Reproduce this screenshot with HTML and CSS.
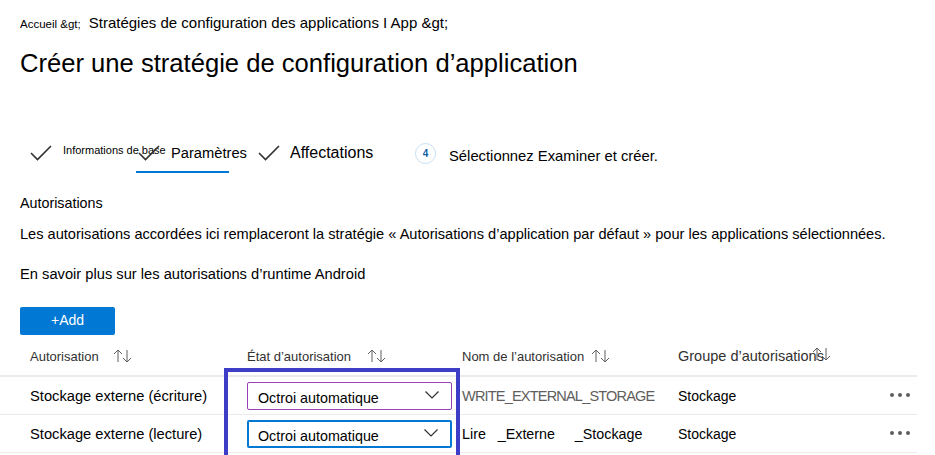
FILE: index.html
```html
<!DOCTYPE html>
<html lang="fr">
<head>
<meta charset="utf-8">
<link rel="stylesheet" href="styles.css">
</head>
<body>
<div class="page">
  <div class="breadcrumb">
    <span class="crumb-small">Accueil &amp;gt;</span>
    <span class="crumb-big">Stratégies de configuration des applications I App &amp;gt;</span>
  </div>
  <h1 class="title">Créer une stratégie de configuration d’application</h1>

  <div class="steps">
    <div class="step step-1">
      <svg class="check" width="22" height="16" viewBox="0 0 22 16"><polyline points="1,8 7.5,14.5 21,1" fill="none" stroke="#323130" stroke-width="1.6"/></svg>
      <span class="step-label small">Informations de base</span>
    </div>
    <div class="step step-2 active">
      <svg class="check" width="22" height="16" viewBox="0 0 22 16"><polyline points="1,8 7.5,14.5 21,1" fill="none" stroke="#323130" stroke-width="1.6"/></svg>
      <span class="step-label mid">Paramètres</span>
    </div>
    <div class="step step-3">
      <svg class="check" width="22" height="16" viewBox="0 0 22 16"><polyline points="1,8 7.5,14.5 21,1" fill="none" stroke="#323130" stroke-width="1.6"/></svg>
      <span class="step-label big">Affectations</span>
    </div>
    <div class="step step-4">
      <span class="num">4</span>
      <span class="step-label reg">Sélectionnez Examiner et créer.</span>
    </div>
  </div>

  <div class="section-title">Autorisations</div>
  <p class="desc">Les autorisations accordées ici remplaceront la stratégie « Autorisations d’application par défaut » pour les applications sélectionnées.</p>
  <p class="desc learn">En savoir plus sur les autorisations d’runtime Android</p>

  <button class="add-btn">+Add</button>
</div>

<div class="table">
  <div class="row head">
    <div class="cell">Autorisation <svg class="sort s1" width="20" height="14" viewBox="0 0 20 14"><path d="M5 13V1M1 5L5 1L9 5M14 1V13M10 9L14 13L18 9" fill="none" stroke="#605e5c" stroke-width="1"/></svg></div>
    <div class="cell">État d’autorisation <svg class="sort s2" width="20" height="14" viewBox="0 0 20 14"><path d="M5 13V1M1 5L5 1L9 5M14 1V13M10 9L14 13L18 9" fill="none" stroke="#605e5c" stroke-width="1"/></svg></div>
    <div class="cell">Nom de l’autorisation <svg class="sort s3" width="20" height="14" viewBox="0 0 20 14"><path d="M5 13V1M1 5L5 1L9 5M14 1V13M10 9L14 13L18 9" fill="none" stroke="#605e5c" stroke-width="1"/></svg></div>
    <div class="cell grp">Groupe d’autorisations<svg class="sort s4" width="20" height="14" viewBox="0 0 20 14"><path d="M5 13V1M1 5L5 1L9 5M14 1V13M10 9L14 13L18 9" fill="none" stroke="#605e5c" stroke-width="1"/></svg></div>
    <div class="cell"></div>
  </div>
  <div class="row">
    <div class="cell">Stockage externe (écriture)</div>
    <div class="cell"><div class="select purple"><span>Octroi automatique</span><svg width="14" height="8" viewBox="0 0 14 8"><polyline points="0.5,0.5 7,7 13.5,0.5" fill="none" stroke="#323130" stroke-width="1.2"/></svg></div></div>
    <div class="cell gray">WRITE_EXTERNAL_STORAGE</div>
    <div class="cell grp-val">Stockage</div>
    <div class="cell dots"><i></i><i></i><i></i></div>
  </div>
  <div class="row">
    <div class="cell">Stockage externe (lecture)</div>
    <div class="cell"><div class="select blue"><span>Octroi automatique</span><svg width="14" height="8" viewBox="0 0 14 8"><polyline points="0.5,0.5 7,7 13.5,0.5" fill="none" stroke="#323130" stroke-width="1.2"/></svg></div></div>
    <div class="cell name">Lire&nbsp;&nbsp;&nbsp;_Externe&nbsp;&nbsp;&nbsp;&nbsp;&nbsp;_Stockage</div>
    <div class="cell grp-val">Stockage</div>
    <div class="cell dots"><i></i><i></i><i></i></div>
  </div>
  <div class="highlight"></div>
</div>
</body>
</html>
```

FILE: styles.css
```css
* { box-sizing: border-box; }
html, body { margin: 0; padding: 0; background: #fff; }
body {
  font-family: "Liberation Sans", Arial, sans-serif;
  color: #000;
  width: 935px;
  height: 455px;
  overflow: hidden;
}
.page { padding-left: 20px; }

.breadcrumb {
  display: flex;
  align-items: baseline;
  gap: 8px;
  padding-top: 14px;
  height: 36px;
}
.crumb-small { font-size: 11.5px; }
.crumb-big { font-size: 15px; }

.title {
  margin: 12px 0 0;
  font-size: 25.6px;
  font-weight: 400;
  line-height: 30px;
}

.steps {
  display: flex;
  align-items: flex-start;
  margin-top: 61px;
  margin-left: 10px;
  height: 46px;
}
.step { display: flex; align-items: flex-start; position: relative; }
.check { margin-top: 6px; flex: none; }
.step-1 { width: 107px; }
.step-1 .step-label { margin-left: 11px; white-space: nowrap; }
.step-label.small { font-size: 11px; margin-top: 5px; color: #000; }
.step-2 { width: 121px; padding-left: 1px; }
.step-2 .step-label { margin-left: 11px; margin-top: 6px; font-size: 14.7px; }
.step-2::after {
  content: "";
  position: absolute;
  left: -1px;
  top: 32px;
  width: 93px;
  height: 2px;
  background: #0078d4;
}
.step-3 { width: 157px; }
.step-3 .step-label { margin-left: 10px; margin-top: 5px; font-size: 16px; }
.step-4 { align-items: center; margin-top: 3px; }
.num {
  width: 21px;
  height: 21px;
  border-radius: 50%;
  border: 1.5px solid #c7e0f4;
  color: #0f5fa8;
  font-size: 10px;
  font-weight: 700;
  display: flex;
  align-items: center;
  justify-content: center;
  flex: none;
}
.step-4 .step-label { margin-left: 13px; margin-top: 6px; font-size: 14.8px; }

.section-title { font-size: 14.3px; margin-top: 10px; line-height: 16px; }
.desc { margin: 0; font-size: 14.6px; line-height: 16px; }
.section-title + .desc { margin-top: 15px; }
.desc.learn { margin-top: 24px; font-size: 14.7px; }

.add-btn {
  display: block;
  margin-top: 25px;
  width: 95px;
  height: 28px;
  background: #0078d4;
  color: #fff;
  border: none;
  border-radius: 2px;
  font-family: "Liberation Sans", Arial, sans-serif;
  font-size: 14px;
  padding: 0 0 2px;
}

.table {
  position: relative;
  width: 917px;
  margin-top: 2px;
}
.row {
  display: grid;
  grid-template-columns: 247px 215px 216px 192px 47px;
  height: 38px;
  align-items: center;
  border-bottom: 1px solid #edebe9;
  font-size: 14.7px;
  color: #000;
}
.row .cell:first-child { padding-left: 30px; }
.row.head { height: 40px; font-size: 13px; color: #323130; border-bottom: 2px solid #edebe9; }
.row.head .cell { display: flex; align-items: center; white-space: nowrap; }
.row.head .grp { font-size: 14.5px; }
.sort { flex: none; }
.s1 { margin-left: 14px; }
.s2 { margin-left: 16px; }
.s3 { margin-left: 7px; }
.s4 { margin-left: -12px; margin-top: -4px; }
.cell.gray { color: #605e5c; font-size: 14.5px; letter-spacing: -0.8px; white-space: nowrap; }
.cell.name { font-size: 14.3px; }
.cell.grp-val { font-size: 14px; }

.select {
  width: 205px;
  height: 28px;
  border-radius: 2px;
  display: flex;
  align-items: center;
  justify-content: space-between;
  padding: 4px 12px 0 10px;
  font-size: 14.3px;
}
.select.purple { border: 1.5px solid #9b40b8; }
.select.blue { border: 2px solid #0078d4; padding-left: 9px; }
.select svg { margin-top: -6px; }

.dots { display: flex; gap: 4px; padding-left: 20px; margin-top: -2px; }
.dots i { width: 4px; height: 4px; border-radius: 50%; background: #605e5c; }

.highlight {
  position: absolute;
  left: 224px;
  top: 31px;
  width: 236px;
  height: 100px;
  border: 4px solid #3d3dc8;
  pointer-events: none;
}
```
